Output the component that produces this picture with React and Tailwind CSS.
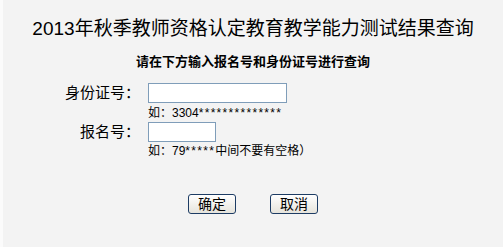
const cjk = { fontFamily: '"Liberation Sans", "Noto Sans CJK SC", sans-serif' };

export default function App() {
  return (
    <div
      className="w-[503px] h-[247px] bg-[#f3f3f3] border-l-[3px] border-[#fbfbfb] text-black overflow-hidden"
      style={cjk}
    >
      {/* title */}
      <h1 className="pt-[19px] text-center text-[19px] leading-[20px] font-normal">
        2013年秋季教师资格认定教育教学能力测试结果查询
      </h1>
      <p className="mt-[15px] text-center text-[13px] leading-[16px] font-bold">
        请在下方输入报名号和身份证号进行查询
      </p>

      {/* form */}
      <div className="mt-[13px]">
        <div className="flex items-center">
          <label className="w-[137px] text-right text-[15px] leading-[20px]">身份证号：</label>
          <input
            type="text"
            className="ml-[8px] w-[139px] h-[20px] bg-white border border-[#7f9db9] outline-none"
          />
        </div>
        <p className="mt-[3px] pl-[145px] text-[12px] leading-[14px]">
          如：3304<span className="tracking-[1.3px]">**************</span>
        </p>

        <div className="mt-[2px] flex items-center">
          <label className="w-[137px] text-right text-[15px] leading-[20px]">报名号：</label>
          <input
            type="text"
            className="ml-[8px] w-[68px] h-[20px] bg-white border border-[#7f9db9] outline-none"
          />
        </div>
        <p className="mt-[2px] pl-[145px] text-[12px] leading-[14px]">
          如：79<span className="tracking-[1.3px]">*****</span>中间不要有空格）
        </p>
      </div>

      {/* buttons */}
      <div className="mt-[36px] flex justify-center gap-[34px]">
        <button className="w-[48px] h-[20px] rounded-[3px] border border-[#1d3c64] bg-gradient-to-b from-white to-[#e6e4dc] text-[14px] leading-[18px]">
          确定
        </button>
        <button className="w-[48px] h-[20px] rounded-[3px] border border-[#1d3c64] bg-gradient-to-b from-white to-[#e6e4dc] text-[14px] leading-[18px]">
          取消
        </button>
      </div>
    </div>
  );
}
